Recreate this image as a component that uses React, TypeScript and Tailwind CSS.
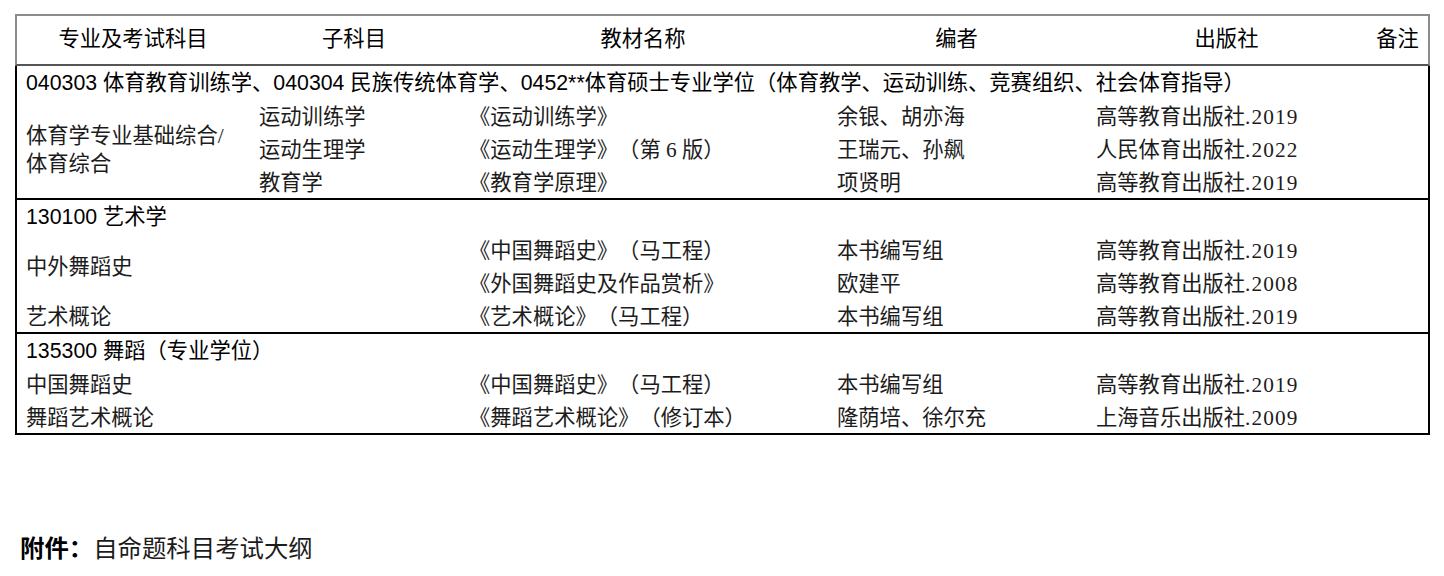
import React from 'react';

const sans = 'font-["Liberation_Sans","Noto_Sans_CJK_SC",sans-serif]';
const serif = 'font-["Liberation_Serif","Noto_Sans_CJK_SC",serif]';

const cols = 'grid grid-cols-[232px_210px_368px_259px_281px_1fr]';

type Book = {
	sub?: string;
	title: string;
	author: string;
	press: string;
};

const Cell = ({ children }: { children?: React.ReactNode }) => (
	<div className="h-[33px] pt-[3px] leading-[30px] pl-[10px] whitespace-nowrap">{children}</div>
);

// publisher name + year, the year in half-width serif digits
const Press = ({ text }: { text: string }) => {
	const [name, year] = text.split('.');
	return (
		<>
			{name}
			<span className="tracking-[1.1px]">.{year}</span>
		</>
	);
};

const BookCells = ({ b }: { b: Book }) => (
	<>
		<Cell>{b.title}</Cell>
		<Cell>{b.author}</Cell>
		<Cell>
			<Press text={b.press} />
		</Cell>
		<Cell />
	</>
);

const Category = ({ children }: { children: React.ReactNode }) => (
	<div className={`col-span-6 h-[33px] pt-[1px] leading-[32px] pl-[9px] text-black whitespace-nowrap ${sans}`}>
		{children}
	</div>
);

const App = () => {
	const peBooks: Book[] = [
		{ sub: '运动训练学', title: '《运动训练学》', author: '余银、胡亦海', press: '高等教育出版社.2019' },
		{ sub: '运动生理学', title: '《运动生理学》（第 6 版）', author: '王瑞元、孙飙', press: '人民体育出版社.2022' },
		{ sub: '教育学', title: '《教育学原理》', author: '项贤明', press: '高等教育出版社.2019' },
	];

	return (
		<div className="w-[1444px] h-[576px] bg-white pt-[14px] pl-[15px] overflow-hidden [text-spacing-trim:space-all]">
			<div className="w-[1415px] text-[21.3px]">
				{/* header */}
				<div
					className={`${cols} h-[52px] items-center border-2 border-[#8c8c8c] border-b-[#555] text-black ${sans}`}
				>
					<div className="text-center">专业及考试科目</div>
					<div className="text-center">子科目</div>
					<div className="text-center">教材名称</div>
					<div className="text-center">编者</div>
					<div className="text-center">出版社</div>
					<div className="text-center">备注</div>
				</div>

				{/* 体育 */}
				<div className={`${cols} border-x-2 border-b-2 border-black text-[#1c1c1c] ${serif}`}>
					<Category>
						040303 体育教育训练学、040304 民族传统体育学、0452**体育硕士专业学位（体育教学、运动训练、竞赛组织、社会体育指导）
					</Category>
					<div className="row-span-3 flex items-center pl-[9px] leading-[28px] pt-[3px]">
						<span>
							体育学专业基础综合/
							<br />
							体育综合
						</span>
					</div>
					{peBooks.map((b, i) => (
						<React.Fragment key={i}>
							<Cell>{b.sub}</Cell>
							<BookCells b={b} />
						</React.Fragment>
					))}
				</div>

				{/* 艺术学 */}
				<div className={`${cols} border-x-2 border-b-2 border-black text-[#1c1c1c] ${serif}`}>
					<Category>130100 艺术学</Category>
					<div className="row-span-2 flex items-center pl-[9px] pt-[3px]">中外舞蹈史</div>
					<Cell />
					<BookCells b={{ title: '《中国舞蹈史》（马工程）', author: '本书编写组', press: '高等教育出版社.2019' }} />
					<Cell />
					<BookCells b={{ title: '《外国舞蹈史及作品赏析》', author: '欧建平', press: '高等教育出版社.2008' }} />
					<div className="h-[33px] pt-[3px] leading-[30px] pl-[9px]">艺术概论</div>
					<Cell />
					<BookCells b={{ title: '《艺术概论》（马工程）', author: '本书编写组', press: '高等教育出版社.2019' }} />
				</div>

				{/* 舞蹈 */}
				<div className={`${cols} border-x-2 border-b-2 border-black text-[#1c1c1c] ${serif}`}>
					<Category>135300 舞蹈（专业学位）</Category>
					<div className="h-[33px] pt-[3px] leading-[30px] pl-[9px]">中国舞蹈史</div>
					<Cell />
					<BookCells b={{ title: '《中国舞蹈史》（马工程）', author: '本书编写组', press: '高等教育出版社.2019' }} />
					<div className="h-[33px] pt-[3px] leading-[30px] pl-[9px]">舞蹈艺术概论</div>
					<Cell />
					<BookCells b={{ title: '《舞蹈艺术概论》（修订本）', author: '隆荫培、徐尔充', press: '上海音乐出版社.2009' }} />
				</div>
			</div>

			<p className={`mt-[98px] pl-[5px] text-[24.4px] leading-[32px] text-[#1c1c1c] ${serif}`}>
				<span className={`font-bold text-black ${sans}`}>附件：</span>
				自命题科目考试大纲
			</p>
		</div>
	);
};

export default App;
